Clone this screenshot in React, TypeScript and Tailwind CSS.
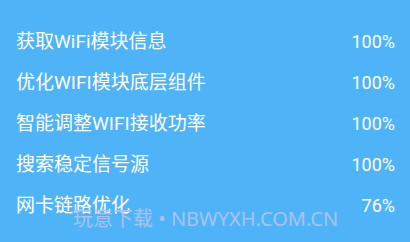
const rows = [
  { name: "获取WiFi模块信息", value: "100%" },
  { name: "优化WIFI模块底层组件", value: "100%" },
  { name: "智能调整WIFI接收功率", value: "100%" },
  { name: "搜索稳定信号源", value: "100%" },
  { name: "网卡链路优化", value: "76%" },
];

export default function App() {
  return (
    <div className="relative w-[410px] h-[242px] overflow-hidden bg-[#4fb4f7] font-['Roboto','Noto_Sans_CJK_SC',sans-serif] text-white">
      <div className="flex flex-col pt-[21px] pl-[16px] pr-[15px]">
        {rows.map((r) => (
          <div key={r.name} className="flex h-[41px] items-center justify-between">
            <span className="text-[19px] leading-[24px]">{r.name}</span>
            <span className="text-[18px] leading-[24px]">{r.value}</span>
          </div>
        ))}
      </div>
      <div className="absolute left-[73px] top-[205px] font-['Noto_Sans','Noto_Sans_CJK_SC',sans-serif] text-[20px] leading-[28px] text-[#a9c3f2] whitespace-nowrap">
        玩意下载 • NBWYXH.COM.CN
      </div>
    </div>
  );
}
